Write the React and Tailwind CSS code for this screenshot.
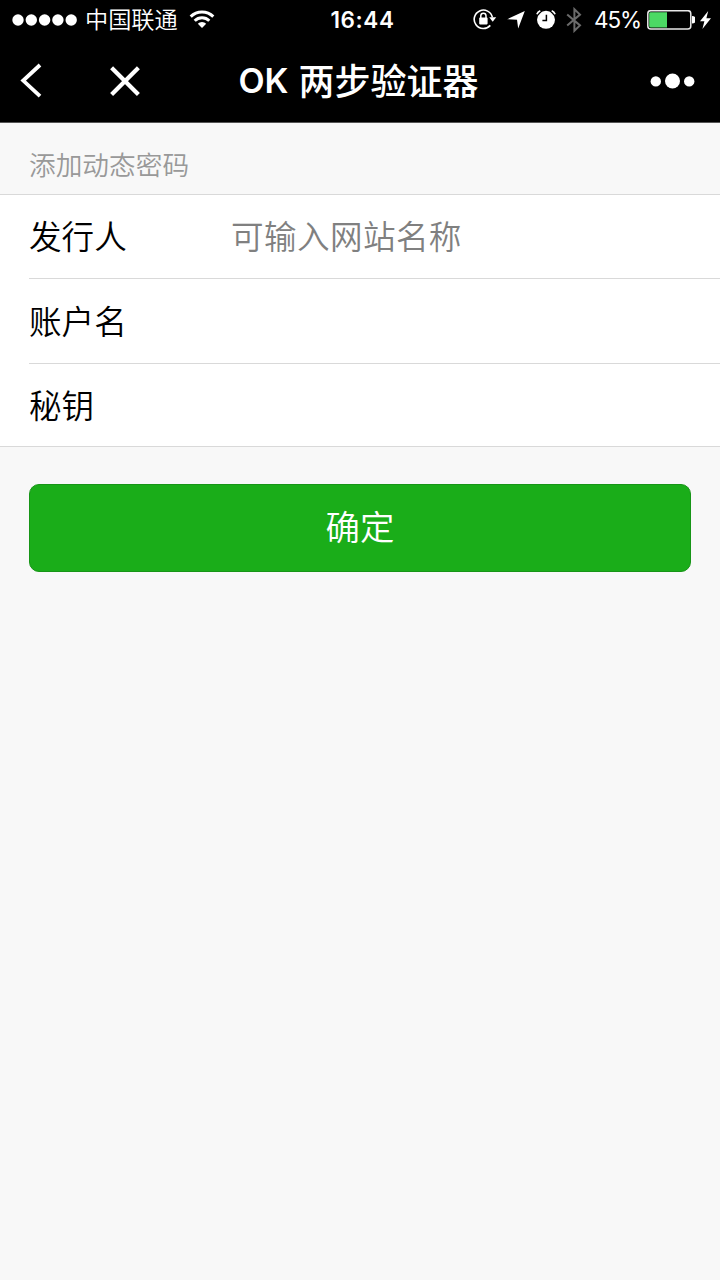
import { useState } from "react";

const fields = [
	{ name: "issuer", label: "发行人", placeholder: "可输入网站名称", height: "h-[83px]" },
	{ name: "account", label: "账户名", placeholder: "", height: "h-[85px] border-t" },
	{ name: "secret", label: "秘钥", placeholder: "", height: "h-[83px] border-t" },
];

function WifiIcon() {
	return (
		<svg className="ml-[11px] h-[20px] w-[26px]" viewBox="0 0 26 20" fill="none" stroke="#fff" strokeWidth="3">
			<path d="M1.7 6.6a16 16 0 0 1 22.6 0" />
			<path d="M5.7 10.8a10.4 10.4 0 0 1 14.6 0" />
			<path d="M13 18l-4.2-4.2a5.8 5.8 0 0 1 8.4 0z" fill="#fff" stroke="none" />
		</svg>
	);
}

function RotationLockIcon() {
	return (
		<svg className="h-[22px] w-[24px]" viewBox="0 0 24 22" fill="none" stroke="#fff">
			<path d="M17.3 16.4A9.2 9.2 0 1 1 19.4 8.4" strokeWidth="1.6" />
			<path d="M16.2 8.2h7l-3.5 4.6z" fill="#fff" stroke="none" />
			<rect x="6.2" y="8.6" width="8.4" height="6.8" rx="0.8" fill="#fff" stroke="none" />
			<path d="M7.8 9.4V6.8a2.6 2.6 0 0 1 5.2 0V9.4" strokeWidth="1.5" />
		</svg>
	);
}

function LocationIcon() {
	return (
		<svg className="ml-[10px] h-[18px] w-[18px]" viewBox="0 0 18 18" fill="#fff">
			<path d="M17.8 0L11.2 17.6L10 8.8L0.2 8.2z" />
		</svg>
	);
}

function AlarmIcon() {
	return (
		<svg className="ml-[11px] h-[20px] w-[20px]" viewBox="0 0 20 20" fill="none" stroke="#fff">
			<circle cx="10" cy="9.8" r="9" fill="#fff" stroke="none" />
			<path d="M0.9 4.6a6 6 0 0 1 3.2-3.6M19.1 4.6a6 6 0 0 0-3.2-3.6" stroke="#000" strokeWidth="4" />
			<path d="M0.9 4.2a6 6 0 0 1 3.4-3.4M19.1 4.2a6 6 0 0 0-3.4-3.4" strokeWidth="1.7" />
			<path d="M10.4 4.8v5.6H6.4" stroke="#000" strokeWidth="1.5" />
		</svg>
	);
}

function BluetoothIcon() {
	return (
		<svg className="ml-[10px] h-[26px] w-[16px]" viewBox="0 0 16 26" fill="none" stroke="#6b6b6b" strokeWidth="2">
			<path d="M1.2 7.4L14 18.4L8.4 23.8V2.2L14 7.6L1.2 18.6" />
		</svg>
	);
}

function BatteryIcon() {
	return (
		<svg className="ml-[6px] h-[20px] w-[48px]" viewBox="0 0 48 20">
			<rect x="0.8" y="0.7" width="43" height="18.2" rx="3" fill="none" stroke="#e8e8e8" strokeWidth="1.5" />
			<path d="M3.6 2.2H20v15.2H3.6a1.4 1.4 0 0 1-1.4-1.4V3.6a1.4 1.4 0 0 1 1.4-1.4z" fill="#4cd964" />
			<path d="M45 6a3.8 3.8 0 0 1 0 7.6z" fill="#fff" />
		</svg>
	);
}

function BoltIcon() {
	return (
		<svg className="ml-[5px] h-[19px] w-[11px]" viewBox="0 0 11 19" fill="#fff">
			<path d="M8.2 0L0 10.2H4.4L2.4 18L11 7.2H6.4z" />
		</svg>
	);
}

function StatusBar() {
	return (
		<div className="grid h-10 grid-cols-[1fr_auto_1fr] items-center text-[22.5px] leading-none">
			<div className="flex items-center pl-3">
				<svg className="h-3 w-[66px]" viewBox="0 0 66 12" fill="#fff">
					<circle cx="6" cy="6" r="5.7" />
					<circle cx="19.3" cy="6" r="5.7" />
					<circle cx="32.6" cy="6" r="5.7" />
					<circle cx="45.9" cy="6" r="5.7" />
					<circle cx="59.2" cy="6" r="5.7" />
				</svg>
				<span className="ml-[7px] pt-[2px] text-[23.2px] font-[350]">中国联通</span>
				<WifiIcon />
			</div>
			<span className="pl-[5px] font-semibold tracking-[0.6px]">16:44</span>
			<div className="flex items-center justify-end pr-[9px]">
				<RotationLockIcon />
				<LocationIcon />
				<AlarmIcon />
				<BluetoothIcon />
				<span className="ml-[12px] tracking-[-1.1px]">45%</span>
				<BatteryIcon />
				<BoltIcon />
			</div>
		</div>
	);
}

function NavBar() {
	return (
		<div className="grid h-[82px] grid-cols-[1fr_auto_1fr] items-center">
			<div className="flex items-center pl-5">
				<button aria-label="返回">
					<svg className="h-[36px] w-[22px]" viewBox="0 0 22 36" fill="none" stroke="#fff" strokeWidth="3.8">
						<path d="M20 2L3.2 17.6L20 33.2" />
					</svg>
				</button>
				<button aria-label="关闭" className="ml-[67px]">
					<svg className="h-8 w-8" viewBox="0 0 32 32" fill="none" stroke="#fff" strokeWidth="4.2">
						<path d="M2.6 2.8L29.4 29.6M29.4 2.8L2.6 29.6" />
					</svg>
				</button>
			</div>
			<h1 className="flex items-center gap-[10px] pr-[3px] text-[36px] leading-none font-medium">
				<span className="text-[34px] font-semibold">OK</span>
				<span className="pt-[2px]">两步验证器</span>
			</h1>
			<button aria-label="更多" className="mr-[25px] justify-self-end">
				<svg className="h-4 w-[45px]" viewBox="0 0 45 16" fill="#fff">
					<circle cx="5.8" cy="8.4" r="5.2" />
					<circle cx="22.5" cy="8" r="7.5" />
					<circle cx="39.2" cy="8.4" r="5.2" />
				</svg>
			</button>
		</div>
	);
}

export default function App() {
	const [values, setValues] = useState({ issuer: "", account: "", secret: "" });

	const handleChange = (e) => {
		setValues((prev) => ({ ...prev, [e.target.name]: e.target.value }));
	};

	return (
		<div className="min-h-screen w-full bg-[#f8f8f8] font-['Inter','Noto_Sans_CJK_SC',sans-serif]">
			<header className="h-[123px] border-b border-[#555] bg-black text-white">
				<StatusBar />
				<NavBar />
			</header>

			<form onSubmit={(e) => e.preventDefault()}>
				<h2 className="flex h-[71px] items-end pb-[9px] pl-[29px] text-[26.7px] leading-[40px] font-[350] text-[#999]">
					添加动态密码
				</h2>

				<div className="border-y border-[#d9d9d9] bg-white pl-[29px]">
					{fields.map((field) => (
						<label
							key={field.name}
							className={`flex items-center border-[#d9d9d9] text-[32.6px] ${field.height}`}
						>
							<span className="w-[202px] shrink-0 pt-[2px] font-[350] text-black">{field.label}</span>
							<input
								name={field.name}
								value={values[field.name]}
								onChange={handleChange}
								placeholder={field.placeholder}
								className="h-[60px] min-w-0 flex-1 font-[350] tracking-[0.4px] outline-none placeholder:text-[#808080]"
							/>
						</label>
					))}
				</div>

				<div className="px-[29px] pt-[37px]">
					<button className="h-[88px] w-full rounded-[10px] border border-[#179517] bg-[#1aad19] text-[34.4px] font-[350] text-white">
						确定
					</button>
				</div>
			</form>
		</div>
	);
}
